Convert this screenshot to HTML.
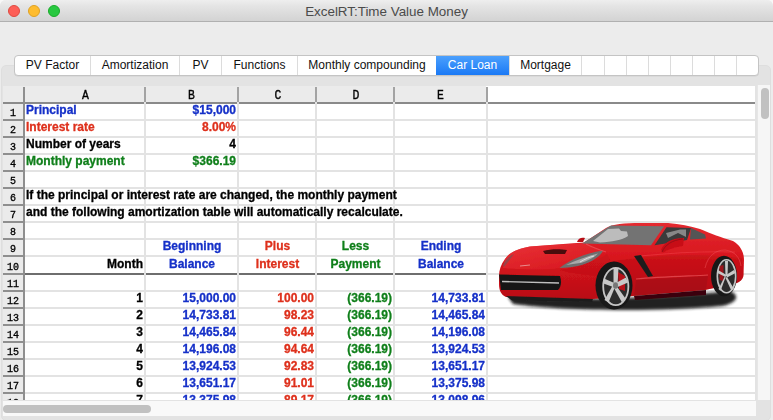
<!DOCTYPE html>
<html><head><meta charset="utf-8">
<style>
*{margin:0;padding:0;box-sizing:border-box}
html,body{width:773px;height:420px;overflow:hidden;background:#f8f8f8;font-family:"Liberation Sans",sans-serif}
#win{position:absolute;left:0;top:0;width:773px;height:420px;background:#ececec;border-radius:6px 6px 0 0;overflow:hidden}
#title{position:absolute;left:0;top:0;width:773px;height:22px;background:linear-gradient(#eeeeee,#e4e4e4 30%,#d3d3d3);border-bottom:1px solid #b0b0b0}
#title .tt{position:absolute;left:0;width:773px;top:3.5px;text-align:center;font-size:13.4px;color:#4b4b4b;line-height:16px}
.light{position:absolute;top:5px;width:12px;height:12px;border-radius:50%}
#group{position:absolute;left:1px;top:65px;width:770px;height:356px;background:#e3e3e3;border:1px solid #dedede;border-radius:5px}
#tabs{position:absolute;left:14px;top:55px;width:745px;height:21px;background:#fff;border:1px solid #c4c4c4;border-radius:4px;overflow:hidden;box-shadow:0 0.5px 0.5px rgba(0,0,0,0.08)}
.tab{position:absolute;top:0;height:19px;border-left:1px solid #dcdcdc;font-size:12px;line-height:19px;text-align:center;color:#111}
.tab.sel{top:-1px;height:21px;line-height:21px;background:linear-gradient(#4ea2fd,#1877f5);box-shadow:inset 0 1px 0 #3d8ef0,inset 0 -1px 0 #1466dc;color:#fff;border-left:none}
#grid{position:absolute;left:3px;top:86px;width:752px;height:314px;background:#fff;overflow:hidden}
#sheet{position:absolute;left:-3px;top:-86px;width:773px;height:420px;will-change:transform}
#hdr{position:absolute;left:3px;top:86px;width:483px;height:16px;background:#ebebeb}
#rowhdr{position:absolute;left:3px;top:86px;width:20px;height:320px;background:#ebebeb}
.hl{position:absolute;height:2px;background:#e3e3e3}
.rhl{position:absolute;left:3px;width:20px;height:2px;background:#8f8f8f}
.vl{position:absolute;top:87px;width:2px;height:320px;background:#e3e3e3}
.vh{position:absolute;top:87px;width:2px;height:15px;background:#a3a3a3}
.rn{position:absolute;left:3px;width:20px;font-family:"Liberation Mono",monospace;font-size:10px;text-align:center;display:flex;align-items:flex-end;justify-content:center;padding-bottom:0px;color:#000;-webkit-text-stroke:0.3px #000}
.ch{position:absolute;top:88px;height:15px;padding-left:0;font-family:"Liberation Mono",monospace;font-size:13px;text-align:center;line-height:15px;color:#000;-webkit-text-stroke:0.35px #000;transform:scaleX(0.88)}
.t{position:absolute;font-size:12px;font-weight:bold;line-height:14px;white-space:nowrap;-webkit-text-stroke:0.3px currentColor}
.t.r{text-align:right}
.t.c{text-align:center}
#vsb{position:absolute;left:757px;top:85px;width:13px;height:315px;background:#f6f6f6;border-left:1px solid #e6e6e6}
#vthumb{position:absolute;left:761px;top:88px;width:8px;height:31px;border-radius:4px;background:#c1c1c1}
#hsb{position:absolute;left:3px;top:400px;width:753px;height:16px;background:#f9f9f9;border-top:1px solid #e3e3e3}
#hthumb{position:absolute;left:3px;top:405px;width:148px;height:8px;border-radius:4px;background:#c1c1c1}
</style></head><body>
<div id="win">
<div id="title"><div class="tt">ExcelRT:Time Value Money</div>
<div class="light" style="left:8px;background:#fd5f57;border:0.5px solid #de4a40"></div>
<div class="light" style="left:28px;background:#febc2e;border:0.5px solid #dea123"></div>
<div class="light" style="left:48px;background:#28c840;border:0.5px solid #1aab29"></div>
</div>
<div id="group"></div>
<div id="tabs"><div class="tab" style="left:-1px;width:76px">PV Factor</div><div class="tab" style="left:75px;width:89px">Amortization</div><div class="tab" style="left:164px;width:42px">PV</div><div class="tab" style="left:206px;width:76px">Functions</div><div class="tab" style="left:282px;width:139px">Monthly compounding</div><div class="tab sel" style="left:421px;width:73px">Car Loan</div><div class="tab" style="left:494px;width:72px">Mortgage</div><div class="tab" style="left:566px;width:23px"></div><div class="tab" style="left:589px;width:22px"></div><div class="tab" style="left:611px;width:22px"></div><div class="tab" style="left:633px;width:22px"></div><div class="tab" style="left:655px;width:22px"></div><div class="tab" style="left:677px;width:22px"></div><div class="tab" style="left:699px;width:22px"></div><div class="tab" style="left:721px;width:23px"></div></div>
<div id="grid"><div id="sheet">
<div id="hdr"></div>
<div id="rowhdr"></div>
<div style="position:absolute;left:3px;top:102px;width:753px;height:2px;background:#8a8a8a"></div>
<div style="position:absolute;left:23px;top:87px;width:2px;height:320px;background:#8f8f8f"></div>
<div class="hl" style="top:119.00px;left:25px;width:731px"></div><div class="rhl" style="top:119.00px"></div><div class="rn" style="top:104.00px;height:15.00px">1</div><div class="hl" style="top:136.00px;left:25px;width:731px"></div><div class="rhl" style="top:136.00px"></div><div class="rn" style="top:121.00px;height:15.00px">2</div><div class="hl" style="top:153.00px;left:25px;width:731px"></div><div class="rhl" style="top:153.00px"></div><div class="rn" style="top:138.00px;height:15.00px">3</div><div class="hl" style="top:170.00px;left:25px;width:731px"></div><div class="rhl" style="top:170.00px"></div><div class="rn" style="top:155.00px;height:15.00px">4</div><div class="hl" style="top:187.00px;left:25px;width:731px"></div><div class="rhl" style="top:187.00px"></div><div class="rn" style="top:172.00px;height:15.00px">5</div><div class="hl" style="top:204.00px;left:25px;width:731px"></div><div class="rhl" style="top:204.00px"></div><div class="rn" style="top:189.00px;height:15.00px">6</div><div class="hl" style="top:221.00px;left:25px;width:731px"></div><div class="rhl" style="top:221.00px"></div><div class="rn" style="top:206.00px;height:15.00px">7</div><div class="hl" style="top:238.00px;left:25px;width:731px"></div><div class="rhl" style="top:238.00px"></div><div class="rn" style="top:223.00px;height:15.00px">8</div><div class="hl" style="top:255.00px;left:25px;width:731px"></div><div class="rhl" style="top:255.00px"></div><div class="rn" style="top:240.00px;height:15.00px">9</div><div class="hl" style="top:273.00px;left:25px;width:461px;background:#6e6e6e"></div><div class="hl" style="top:273.00px;left:488px;width:268px"></div><div class="rhl" style="top:273.00px"></div><div class="rn" style="top:257.00px;height:16.00px">10</div><div class="hl" style="top:290.00px;left:25px;width:731px"></div><div class="rhl" style="top:290.00px"></div><div class="rn" style="top:275.00px;height:15.00px">11</div><div class="hl" style="top:307.00px;left:25px;width:731px"></div><div class="rhl" style="top:307.00px"></div><div class="rn" style="top:292.00px;height:15.00px">12</div><div class="hl" style="top:324.00px;left:25px;width:731px"></div><div class="rhl" style="top:324.00px"></div><div class="rn" style="top:309.00px;height:15.00px">13</div><div class="hl" style="top:341.00px;left:25px;width:731px"></div><div class="rhl" style="top:341.00px"></div><div class="rn" style="top:326.00px;height:15.00px">14</div><div class="hl" style="top:358.00px;left:25px;width:731px"></div><div class="rhl" style="top:358.00px"></div><div class="rn" style="top:343.00px;height:15.00px">15</div><div class="hl" style="top:375.00px;left:25px;width:731px"></div><div class="rhl" style="top:375.00px"></div><div class="rn" style="top:360.00px;height:15.00px">16</div><div class="hl" style="top:392.00px;left:25px;width:731px"></div><div class="rhl" style="top:392.00px"></div><div class="rn" style="top:377.00px;height:15.00px">17</div><div class="hl" style="top:409.00px;left:25px;width:731px"></div><div class="rhl" style="top:409.00px"></div><div class="rn" style="top:394.00px;height:15.00px">18</div><div class="vl" style="left:144px"></div><div class="vl" style="left:237px"></div><div class="vl" style="left:315px"></div><div class="vl" style="left:393px"></div><div class="vl" style="left:486px"></div>
<div class="vh" style="left:144px"></div><div class="vh" style="left:237px"></div><div class="vh" style="left:315px"></div><div class="vh" style="left:393px"></div><div class="vh" style="left:486px"></div>
<div class="ch" style="left:25.8px;width:119px">A</div>
<div class="ch" style="left:145.8px;width:91px">B</div>
<div class="ch" style="left:240.1px;width:76px">C</div>
<div class="ch" style="left:318px;width:76px">D</div>
<div class="ch" style="left:394.8px;width:91px">E</div>
<div class="t" style="left:26px;top:102.84px;color:#1530c8;">Principal</div><div class="t r" style="right:537px;top:102.84px;color:#1530c8;">$15,000</div><div class="t" style="left:26px;top:119.84px;color:#de301c;">Interest rate</div><div class="t r" style="right:537px;top:119.84px;color:#de301c;">8.00%</div><div class="t" style="left:26px;top:136.84px;color:#000;">Number of years</div><div class="t r" style="right:537px;top:136.84px;color:#000;">4</div><div class="t" style="left:26px;top:153.84px;color:#0f7f1a;">Monthly payment</div><div class="t r" style="right:537px;top:153.84px;color:#0f7f1a;">$366.19</div><div class="t" style="left:26px;top:187.84px;color:#000;">If the principal or interest rate are changed, the monthly payment</div><div class="t" style="left:26px;top:204.84px;color:#000;">and the following amortization table will automatically recalculate.</div><div class="t c" style="left:146.5px;width:91px;top:238.84px;color:#1530c8;">Beginning</div><div class="t c" style="left:239.5px;width:76px;top:238.84px;color:#de301c;">Plus</div><div class="t c" style="left:317.5px;width:76px;top:238.84px;color:#0f7f1a;">Less</div><div class="t c" style="left:395.5px;width:91px;top:238.84px;color:#1530c8;">Ending</div><div class="t r" style="right:630px;top:256.84px;color:#000;">Month</div><div class="t c" style="left:146.5px;width:91px;top:256.84px;color:#1530c8;">Balance</div><div class="t c" style="left:239.5px;width:76px;top:256.84px;color:#de301c;">Interest</div><div class="t c" style="left:317.5px;width:76px;top:256.84px;color:#0f7f1a;">Payment</div><div class="t c" style="left:395.5px;width:91px;top:256.84px;color:#1530c8;">Balance</div><div class="t r" style="right:630px;top:290.84px;color:#000;">1</div><div class="t r" style="right:537px;top:290.84px;color:#1530c8;">15,000.00</div><div class="t r" style="right:459px;top:290.84px;color:#de301c;">100.00</div><div class="t r" style="right:381px;top:290.84px;color:#0f7f1a;">(366.19)</div><div class="t r" style="right:288px;top:290.84px;color:#1530c8;">14,733.81</div><div class="t r" style="right:630px;top:307.84px;color:#000;">2</div><div class="t r" style="right:537px;top:307.84px;color:#1530c8;">14,733.81</div><div class="t r" style="right:459px;top:307.84px;color:#de301c;">98.23</div><div class="t r" style="right:381px;top:307.84px;color:#0f7f1a;">(366.19)</div><div class="t r" style="right:288px;top:307.84px;color:#1530c8;">14,465.84</div><div class="t r" style="right:630px;top:324.84px;color:#000;">3</div><div class="t r" style="right:537px;top:324.84px;color:#1530c8;">14,465.84</div><div class="t r" style="right:459px;top:324.84px;color:#de301c;">96.44</div><div class="t r" style="right:381px;top:324.84px;color:#0f7f1a;">(366.19)</div><div class="t r" style="right:288px;top:324.84px;color:#1530c8;">14,196.08</div><div class="t r" style="right:630px;top:341.84px;color:#000;">4</div><div class="t r" style="right:537px;top:341.84px;color:#1530c8;">14,196.08</div><div class="t r" style="right:459px;top:341.84px;color:#de301c;">94.64</div><div class="t r" style="right:381px;top:341.84px;color:#0f7f1a;">(366.19)</div><div class="t r" style="right:288px;top:341.84px;color:#1530c8;">13,924.53</div><div class="t r" style="right:630px;top:358.84px;color:#000;">5</div><div class="t r" style="right:537px;top:358.84px;color:#1530c8;">13,924.53</div><div class="t r" style="right:459px;top:358.84px;color:#de301c;">92.83</div><div class="t r" style="right:381px;top:358.84px;color:#0f7f1a;">(366.19)</div><div class="t r" style="right:288px;top:358.84px;color:#1530c8;">13,651.17</div><div class="t r" style="right:630px;top:375.84px;color:#000;">6</div><div class="t r" style="right:537px;top:375.84px;color:#1530c8;">13,651.17</div><div class="t r" style="right:459px;top:375.84px;color:#de301c;">91.01</div><div class="t r" style="right:381px;top:375.84px;color:#0f7f1a;">(366.19)</div><div class="t r" style="right:288px;top:375.84px;color:#1530c8;">13,375.98</div><div class="t r" style="right:630px;top:392.84px;color:#000;">7</div><div class="t r" style="right:537px;top:392.84px;color:#1530c8;">13,375.98</div><div class="t r" style="right:459px;top:392.84px;color:#de301c;">89.17</div><div class="t r" style="right:381px;top:392.84px;color:#0f7f1a;">(366.19)</div><div class="t r" style="right:288px;top:392.84px;color:#1530c8;">13,098.96</div>
<svg style="position:absolute;left:0;top:0" width="773" height="420" viewBox="0 0 773 420">
<defs>
<linearGradient id="bodyg" x1="0" y1="0" x2="0" y2="1">
<stop offset="0" stop-color="#e42a30"/><stop offset="0.5" stop-color="#d6141c"/><stop offset="1" stop-color="#b80e16"/>
</linearGradient>
<linearGradient id="hoodg" x1="0" y1="0" x2="1" y2="1">
<stop offset="0" stop-color="#ee3a3e"/><stop offset="1" stop-color="#d81820"/>
</linearGradient>
<filter id="blur2" x="-20%" y="-100%" width="140%" height="300%"><feGaussianBlur stdDeviation="1.8"/></filter>
<filter id="blur1"><feGaussianBlur stdDeviation="0.5"/></filter>
</defs>
<path d="M508,297 C560,300 640,300 730,291 C740,295 738,303 722,306 C660,312 560,311 513,304 Z" fill="#151515" opacity="0.95" filter="url(#blur2)"/>
<g filter="url(#blur1)">
<path d="M499,276 C499,270 501,264 505,259 C509,253 516,249 530,246.5 L570,243.5 L584,242.5 L606,228 C612,224 625,223 640,223 L668,223 C680,224 690,226 700,229 C712,234 720,237 733,241 C740,245 744,252 744,260 L743.5,275 C743,279 741,281 737,283 L705,290 L633,296 L593,299 L560,300 L506,297 C501,295 499,290 499,284 Z" fill="url(#bodyg)"/>
<path d="M505,259 C509,253 516,249 530,246.5 L584,243 C590,246 598,250 604,252 C590,256 575,262 560,268 C545,270 525,270 503,268 Z" fill="url(#hoodg)" opacity="0.7"/>
<path d="M612,261 C650,256 690,252 742,258 L743.5,275 C743,279 741,281 737,283 L705,290 L633,296 C632,280 626,266 612,261 Z" fill="#a80a12" opacity="0.3"/>
<path d="M582,243.5 L611,225.5 L664,226.2 L651,245.2 Z" fill="#737373"/>
<path d="M593,241 L608,229 L619,228.5 L621,231 L627,231.5 L628,236 C622,240 612,242 600,242.5 Z" fill="#c4c4c4" opacity="0.9"/>
<path d="M654.5,245.2 L666.5,227.2 L691,228 L687,240 Z" fill="#3a3a3a"/>
<path d="M666,233 L680,229.5 L686,229.5 L686,237 L678,233 L668,238 Z" fill="#a8a8a8" opacity="0.7"/>
<path d="M691,228 L705,234.5 L706,238.5 L690,239.5 Z" fill="#555"/>
<path d="M661,250 C664,242 672,238 684,238 L683,246 C676,247 668,249 663,253 Z" fill="#c80f18"/>
<path d="M662,252 C665,245 672,240 683,239" stroke="#8a0a10" stroke-width="0.8" fill="none"/>
<path d="M577,242 C578,238 582,237 585,238 L583,242 Z" fill="#b80d15"/>
<path d="M543,251 C550,249 560,249 567,250 L565,254 L545,254 Z" fill="#4a0a0e"/>
<path d="M559.5,268 C568,261 585,253 603,250.5 C601,256 592,262 582,265 C575,267 566,268 559.5,268 Z" fill="#6e6e6e"/>
<path d="M566,265 C575,261 587,256 598,253.5 C595,257 588,261 580,263 Z" fill="#a8a8a8"/>
<path d="M580,262 C585,259 590,257 594,256" stroke="#e0e0e0" stroke-width="1" fill="none"/>
<path d="M503,265 C505,260 509,256 514,254 C511,258 508,262 504,267 Z" fill="#8a4a4e" opacity="0.8"/>
<path d="M499,274.5 L560,276 C562,282 561,287 558,290 L501,290 Z" fill="#161616"/>
<path d="M502,281.5 L559,283" stroke="#c0c0c0" stroke-width="1.3"/>
<path d="M506,296 L593,299 L592,302 L512,300.5 Z" fill="#1e1e1e"/>
<path d="M640,256 C670,253 700,251 735,252" stroke="#f04048" stroke-width="1.2" fill="none" opacity="0.55"/>
<path d="M636,279 C660,277 690,276 708,275" stroke="#f26068" stroke-width="1.2" fill="none" opacity="0.6"/>
<path d="M636,280 L708,276 L706,290 L634,296 Z" fill="#9a0810" opacity="0.45"/>
<path d="M634,256 L641,255 L653,276 L648,277 Z" fill="#1e1e1e"/>
<path d="M634,296 L706,290 L706,295 L635,300 Z" fill="#3a0508"/>
<path d="M520,266 L530,265" stroke="#f0d0d0" stroke-width="1" opacity="0.6"/>
<path d="M586,244 C592,247 600,250 606,252" stroke="#f26068" stroke-width="1.2" fill="none" opacity="0.6"/>
<path d="M560,270 C575,268 595,262 607,254 C612,262 615,270 612,276 C595,276 575,274 560,270 Z" fill="#b00d15" opacity="0.25"/>
<path d="M705,268 C708,255 716,250 725,250 C735,251 740,258 741,266" stroke="#f05058" stroke-width="1" fill="none" opacity="0.5"/>
</g>
<ellipse cx="614" cy="285.5" rx="18.5" ry="24" fill="#181818"/>
<ellipse cx="615.8" cy="286.5" rx="12.6" ry="18.7" fill="#2c2c2c" stroke="#c4c4c4" stroke-width="1.8"/>
<path d="M618,272 L625,276 L625,291 L619,289 Z" fill="#b8121a"/>
<g fill="#c8c8c8">
<path d="M613.5,285 L613.5,268 L618.5,268 L617.5,285 Z"/>
<path d="M615,283.5 L626,277.5 L628,282.5 L616.5,287.5 Z"/>
<path d="M616.5,286 L625.5,298.5 L622,302.5 L614,288 Z"/>
<path d="M615,287 L608.5,302.5 L604.5,300 L613,285 Z"/>
<path d="M614.5,287.5 L603.5,283.5 L604,278.5 L615.5,283.5 Z"/>
</g>
<ellipse cx="615.5" cy="285.5" rx="2.5" ry="3.2" fill="#777"/>
<ellipse cx="724" cy="276" rx="13" ry="20.2" fill="#181818"/>
<ellipse cx="726.5" cy="276.2" rx="9.2" ry="16.5" fill="#2c2c2c" stroke="#c4c4c4" stroke-width="1.6"/>
<path d="M719.5,266 L723.5,265 L723.5,281 L719.5,280 Z" fill="#a8121a" opacity="0.9"/>
<g fill="#c8c8c8">
<path d="M725.5,276 L725,261 L728,261 L727.5,276 Z"/>
<path d="M726,275 L734,270 L735.5,273 L727,277.5 Z"/>
<path d="M727,277 L734,289 L731.5,291 L725.5,278 Z"/>
<path d="M725.5,277.5 L720.5,291 L718.5,289 L725,276 Z"/>
<path d="M725.5,277 L717.5,273 L718,270 L726.5,275 Z"/>
</g>
</svg>

</div></div>
<div id="vsb"></div><div id="vthumb"></div>
<div id="hsb"></div><div id="hthumb"></div>
</div>
</body></html>
